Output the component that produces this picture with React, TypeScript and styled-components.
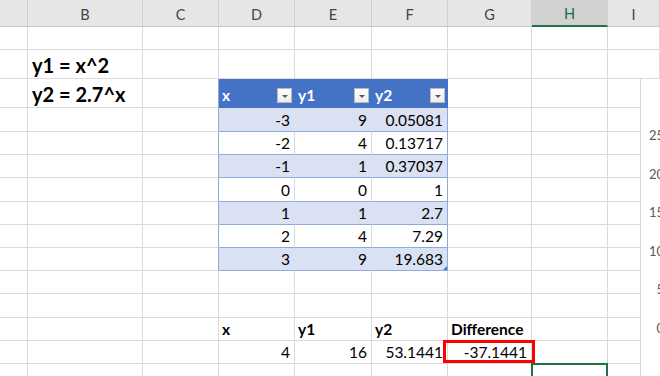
import React from 'react';
import styled, { createGlobalStyle } from 'styled-components';

const Global = createGlobalStyle`
  html, body { margin: 0; padding: 0; background: #ffffff; }
  body { font-family: Lato, "Liberation Sans", sans-serif; overflow: hidden; }
`;

const COL_WIDTHS = [28, 115, 76, 76, 77, 76, 84, 76, 52];
const ROW_HEIGHTS = [23, 29, 29, 24, 23, 23, 24, 23, 23, 23, 23, 24, 23, 23, 23];
const LETTERS = ['', 'B', 'C', 'D', 'E', 'F', 'G', 'H', 'I'];
const SELECTED_COL = 7;

const TABLE_DATA = [
  ['-3', '9', '0.05081'],
  ['-2', '4', '0.13717'],
  ['-1', '1', '0.37037'],
  ['0', '0', '1'],
  ['1', '1', '2.7'],
  ['2', '4', '7.29'],
  ['3', '9', '19.683'],
];

const CHART_TICKS = ['25', '20', '15', '10', '5', '0'];

const cols = COL_WIDTHS.map((w) => `${w}px`).join(' ');

const Sheet = styled.div`
  position: relative;
  width: 660px;
  height: 376px;
  overflow: hidden;
  background: #ffffff;
`;

const ColumnHeaderBar = styled.div`
  display: grid;
  grid-template-columns: ${cols};
  height: 27px;
`;

const ColumnHeader = styled.div<{ $selected?: boolean }>`
  box-sizing: border-box;
  display: flex;
  align-items: center;
  justify-content: center;
  padding-top: 2px;
  background: ${(p) => (p.$selected ? '#d2d2d2' : '#e6e6e6')};
  border-right: 1px solid #cfcfcf;
  border-bottom: ${(p) => (p.$selected ? '2px solid #217346' : '1px solid #c6c6c6')};
  color: ${(p) => (p.$selected ? '#1e6a40' : '#444444')};
  font-size: 14.5px;
  white-space: nowrap;
`;

const Grid = styled.div`
  display: grid;
  grid-template-columns: ${cols};
  grid-template-rows: ${ROW_HEIGHTS.map((h) => `${h}px`).join(' ')};
`;

const Cell = styled.div<{ $edge?: boolean }>`
  box-sizing: border-box;
  position: relative;
  display: flex;
  align-items: flex-end;
  justify-content: flex-start;
  min-width: 0;
  padding: 0 3px 1px 3px;
  border-right: 1px solid ${(p) => (p.$edge ? '#8ea9db' : '#dadada')};
  border-bottom: 1px solid #dadada;
  color: #000000;
  font-size: 15.5px;
  line-height: 20px;
  white-space: nowrap;
`;

const FormulaCell = styled(Cell)`
  font-size: 20px;
  font-weight: 700;
  line-height: 26px;
  padding-left: 4px;
  padding-bottom: 0;
`;

const LabelCell = styled(Cell)`
  font-weight: 700;
`;

const ValueCell = styled(Cell)`
  justify-content: flex-end;
  padding-right: 4px;
`;

const TableHeadCell = styled(Cell)`
  justify-content: space-between;
  align-items: center;
  padding: 4px 2px 0 3px;
  background: #4472c4;
  border-right-color: #4472c4;
  border-bottom-color: #4472c4;
  color: #ffffff;
  font-weight: 700;
`;

const TableCell = styled(Cell)<{ $band: boolean; $last?: boolean }>`
  justify-content: flex-end;
  padding-right: 4px;
  background: ${(p) => (p.$band ? '#d9e1f2' : '#ffffff')};
  border-bottom-color: #8ea9db;
  border-right-color: ${(p) => (p.$last ? '#8ea9db' : p.$band ? '#d9e1f2' : '#dadada')};
`;

const FilterButton = styled.span`
  box-sizing: border-box;
  width: 15px;
  height: 15px;
  display: flex;
  align-items: center;
  justify-content: center;
  background: linear-gradient(#ffffff, #ececec);
  border: 1px solid #b9b9b9;
  &::after {
    content: '';
    margin-top: 2px;
    border-left: 3px solid transparent;
    border-right: 3px solid transparent;
    border-top: 3px solid #5a5a5a;
  }
`;

const ResizeHandle = styled.span`
  position: absolute;
  right: 0;
  bottom: 0;
  width: 0;
  height: 0;
  border-left: 4px solid transparent;
  border-bottom: 4px solid #4472c4;
`;

const Highlight = styled.span`
  position: absolute;
  left: -5px;
  right: -4px;
  top: -1px;
  bottom: 0;
  border: 3px solid #ff0000;
  pointer-events: none;
`;

const ActiveCell = styled.span`
  position: absolute;
  left: -1px;
  right: -1px;
  top: -1px;
  bottom: -6px;
  border: 2px solid #217346;
  pointer-events: none;
`;

const Chart = styled.div`
  position: absolute;
  left: 640px;
  top: 78px;
  width: 200px;
  height: 320px;
  box-sizing: border-box;
  background: #ffffff;
  border: 1px solid #d9d9d9;
`;

const AxisLabels = styled.div`
  display: flex;
  flex-direction: column;
  align-items: flex-end;
  gap: 23.6px;
  width: 23px;
  padding-top: 49px;
  color: #595959;
  font-size: 13px;
  line-height: 15px;
`;

function renderCell(r: number, c: number) {
  const key = `${r}-${c}`;
  const edge = c === 2 && r >= 2 && r <= 9;

  if (c === 1 && r === 1) return <FormulaCell key={key}>y1 = x^2</FormulaCell>;
  if (c === 1 && r === 2) return <FormulaCell key={key}>y2 = 2.7^x</FormulaCell>;

  if (r === 2 && c >= 3 && c <= 5) {
    return (
      <TableHeadCell key={key}>
        <span>{['x', 'y1', 'y2'][c - 3]}</span>
        <FilterButton />
      </TableHeadCell>
    );
  }

  if (r >= 3 && r <= 9 && c >= 3 && c <= 5) {
    const i = r - 3;
    const last = c === 5;
    return (
      <TableCell key={key} $band={i % 2 === 0} $last={last}>
        {TABLE_DATA[i][c - 3]}
        {last && i === TABLE_DATA.length - 1 && <ResizeHandle />}
      </TableCell>
    );
  }

  if (r === 12 && c >= 3 && c <= 6) {
    return <LabelCell key={key}>{['x', 'y1', 'y2', 'Difference'][c - 3]}</LabelCell>;
  }

  if (r === 13 && c >= 3 && c <= 6) {
    return (
      <ValueCell key={key}>
        {['4', '16', '53.1441', '-37.1441'][c - 3]}
        {c === 6 && <Highlight />}
      </ValueCell>
    );
  }

  if (r === 14 && c === SELECTED_COL) {
    return (
      <Cell key={key}>
        <ActiveCell />
      </Cell>
    );
  }

  return <Cell key={key} $edge={edge} />;
}

export default function App() {
  return (
    <>
      <Global />
      <Sheet>
        <ColumnHeaderBar>
          {LETTERS.map((l, i) => (
            <ColumnHeader key={i} $selected={i === SELECTED_COL}>
              {l}
            </ColumnHeader>
          ))}
        </ColumnHeaderBar>
        <Grid>
          {ROW_HEIGHTS.map((_, r) => COL_WIDTHS.map((_, c) => renderCell(r, c)))}
        </Grid>
        <Chart>
          <AxisLabels>
            {CHART_TICKS.map((t) => (
              <span key={t}>{t}</span>
            ))}
          </AxisLabels>
        </Chart>
      </Sheet>
    </>
  );
}
